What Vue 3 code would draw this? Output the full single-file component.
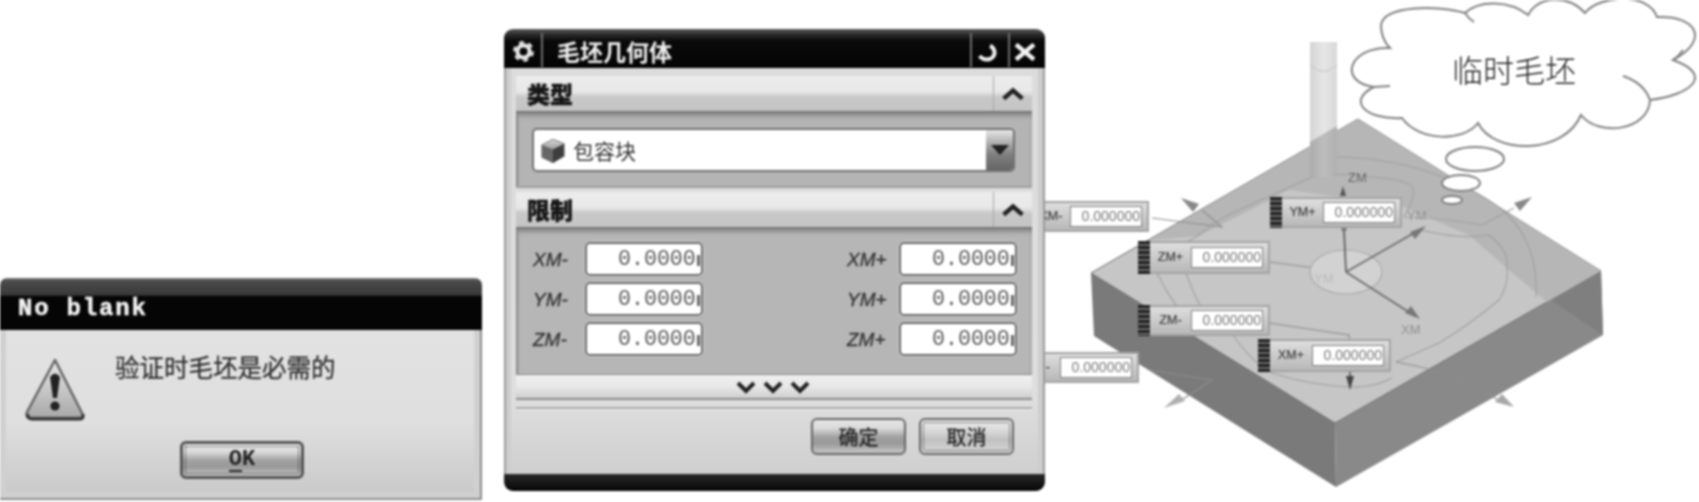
<script setup>
const limits = [
  { l: 'XM-', r: 'XM+' },
  { l: 'YM-', r: 'YM+' },
  { l: 'ZM-', r: 'ZM+' },
]
// Handles sit on the free canvas; positions are relative to the canvas origin (1046, 0).
// The two leftmost ones run underneath the dialog, which covers their labels.
const handles = [
  { id: 'xm', label: 'XM-', x: -15, y: 201, w: 119, h: 31, grip: false },
  { id: 'ym', label: 'YM+', x: 225, y: 197, w: 132, h: 31, grip: true },
  { id: 'zp', label: 'ZM+', x: 93, y: 241, w: 132, h: 33, grip: true },
  { id: 'zm', label: 'ZM-', x: 93, y: 305, w: 132, h: 31, grip: true },
  { id: 'xp', label: 'XM+', x: 213, y: 339, w: 133, h: 33, grip: true },
  { id: 'ym2', label: 'YM-', x: -30, y: 352, w: 124, h: 31, grip: false },
]
</script>

<template>
  <div class="stage">
    <section class="alert">
      <header class="alert-title">No blank</header>
      <div class="alert-body">
        <div class="alert-msg">
          <svg class="warn" viewBox="0 0 62 64">
            <defs>
              <linearGradient id="warnFill" x1="0" y1="0" x2="0" y2="1">
                <stop offset="0" stop-color="#e8e8e8" />
                <stop offset="1" stop-color="#a8a8a8" />
              </linearGradient>
            </defs>
            <path d="M31 3 L58 56 Q60 61 55 61 L7 61 Q1 61 3 55 Z" fill="url(#warnFill)" stroke="#666" stroke-width="2.5" stroke-linejoin="round" />
            <path d="M4 57 Q3 62 8 62 L56 62 Q60 62 59 57" fill="none" stroke="#333" stroke-width="3" />
            <path d="M26 20 Q31 13 36 20 L33 41 L29 41 Z" fill="#222" />
            <circle cx="31" cy="49" r="4.6" fill="#222" />
          </svg>
          <p>验证时毛坯是必需的</p>
        </div>
        <button class="btn ok"><span class="ok-label">OK</span></button>
      </div>
    </section>

    <section class="blank">
      <header class="blank-title">
        <svg class="gear" viewBox="0 0 24 24">
          <circle cx="12" cy="12" r="6.4" fill="none" stroke="#e6e6e6" stroke-width="4.4" />
          <circle cx="12" cy="12" r="9.6" fill="none" stroke="#e6e6e6" stroke-width="2.6" stroke-dasharray="5 5.05" />
        </svg>
        <span class="t-div"></span>
        <span class="t-text">毛坯几何体</span>
        <span class="t-div"></span>
        <svg class="t-hook" viewBox="0 0 20 18">
          <path d="M1.5 12 Q6 17 12 15 Q18 12 16 6 Q15 3 12 2" fill="none" stroke="#eee" stroke-width="4" />
        </svg>
        <span class="t-div"></span>
        <svg class="t-x" viewBox="0 0 22 18">
          <path d="M2 1.5 L20 16.5 M20 1.5 L2 16.5" stroke="#f2f2f2" stroke-width="4.4" />
        </svg>
      </header>

      <div class="blank-body">
        <div class="sec-head">
          <b>类型</b>
          <span class="caret"><svg viewBox="0 0 20 12"><path d="M2 10 L10 3 L18 10" fill="none" stroke="#222" stroke-width="3.8" /></svg></span>
        </div>
        <div class="sec-type">
          <div class="drop">
            <svg class="cube" viewBox="0 0 24 24">
              <defs>
                <linearGradient id="cubeTop" x1="0" y1="0" x2="0" y2="1">
                  <stop offset="0" stop-color="#d8d8d8" />
                  <stop offset="1" stop-color="#9a9a9a" />
                </linearGradient>
              </defs>
              <path d="M2 7 L12 2 L22 6 L22 17 L12 23 L2 18 Z" fill="#666" stroke="#666" stroke-width="1.4" stroke-linejoin="round" />
              <path d="M2 7 L12 2 L22 6 L12 11 Z" fill="url(#cubeTop)" />
              <path d="M12 11 L22 6 L22 17 L12 23 Z" fill="#3d3d3d" />
            </svg>
            <span class="drop-text">包容块</span>
            <span class="drop-btn"><i></i></span>
          </div>
        </div>
        <div class="sec-head">
          <b>限制</b>
          <span class="caret"><svg viewBox="0 0 20 12"><path d="M2 10 L10 3 L18 10" fill="none" stroke="#222" stroke-width="3.8" /></svg></span>
        </div>
        <div class="sec-limit">
          <div v-for="row in limits" :key="row.l" class="lim-row">
            <div class="lim-cell">
              <em>{{ row.l }}</em>
              <span class="num">0.0000</span>
            </div>
            <div class="lim-cell">
              <em>{{ row.r }}</em>
              <span class="num">0.0000</span>
            </div>
          </div>
        </div>
        <div class="more">
          <svg viewBox="0 0 76 14"><path d="M2 3 L10 11 L18 3 M29 3 L37 11 L45 3 M56 3 L64 11 L72 3" fill="none" stroke="#222" stroke-width="4" /></svg>
        </div>
        <div class="sep"></div>
        <div class="actions">
          <button class="btn act">确定</button>
          <button class="btn act dotted">取消</button>
        </div>
      </div>
      <footer class="blank-foot"></footer>
    </section>

    <div class="canvas">
      <svg class="scene" viewBox="1046 0 653 502" width="653" height="502">
        <defs>
          <linearGradient id="tool" x1="0" y1="0" x2="1" y2="0">
            <stop offset="0" stop-color="#d4d4d4" />
            <stop offset=".5" stop-color="#e6e6e6" />
            <stop offset="1" stop-color="#d8d8d8" />
          </linearGradient>
          <linearGradient id="toolIn" x1="0" y1="0" x2="1" y2="0">
            <stop offset="0" stop-color="#acacac" />
            <stop offset=".5" stop-color="#bdbdbd" />
            <stop offset="1" stop-color="#b0b0b0" />
          </linearGradient>
        </defs>
        <!-- block -->
        <path d="M1092 273 L1095 336 L1337 487 L1336 423 Z" fill="#7a7a7a" />
        <path d="M1336 423 L1337 487 L1604 335 L1602 271 Z" fill="#898989" />
        <path d="M1552 300 L1604 335 L1602 271 Z" fill="#7f7f7f" />
        <path d="M1359 119 L1092 273 L1336 423 L1602 271 Z" fill="#c6c6c6" stroke="#6c6c6c" stroke-width="1" />
        <path d="M1359 119 L1150 240 L1200 236 L1290 190 L1400 205 L1470 235 L1510 270 L1548 302 L1602 271 Z" fill="#b6b6b6" />
        <!-- contours -->
        <g fill="none" stroke="#a0a0a0" stroke-width="1.1">
          <path d="M1158 277 Q1170 250 1197 237 Q1220 218 1240 210 L1313 177 Q1345 172 1373 177 Q1410 180 1413 187 Q1418 195 1405 217" />
          <path d="M1313 157 Q1380 155 1433 173 Q1480 190 1507 213 Q1540 245 1537 297" />
          <path d="M1405 217 Q1445 218 1483 225 L1515 208" />
          <path d="M1423 230 Q1460 240 1490 235 Q1510 250 1508 267 Q1510 285 1500 300 Q1470 325 1440 343 L1397 362" />
          <path d="M1160 276 Q1170 300 1200 333" />
          <path d="M1187 273 Q1195 295 1202 307" />
          <path d="M1233 333 Q1250 360 1273 373 Q1310 385 1350 387 Q1375 388 1393 378" />
        </g>
        <g fill="none" stroke="#8d8d8d" stroke-width="1.1">
          <path d="M1153 218 L1223 227 L1203 210" />
          <path d="M1270 262 L1347 272" />
          <path d="M1270 323 L1350 335 L1350 340" />
          <path d="M1397 362 Q1430 368 1457 377 Q1480 385 1503 403" />
          <path d="M1150 370 L1213 380 L1178 403" />
        </g>
        <ellipse cx="1347" cy="272" rx="36" ry="22" fill="#d2d2d2" stroke="#a8a8a8" stroke-width="1.1" />
        <!-- tool -->
        <rect x="1311" y="42" width="27" height="100" fill="url(#tool)" />
        <path d="M1311 65 Q1324 78 1338 65" fill="none" stroke="#c4c4c4" />
        <path d="M1311 142 L1338 126 L1338 173 Q1324 181 1311 175 Z" fill="url(#toolIn)" />
        <!-- axes -->
        <g stroke="#555" stroke-width="1.6" fill="#555">
          <path d="M1347 272 L1345 230" />
          <path d="M1347 272 L1422 229" stroke="#6a6a6a" />
          <path d="M1347 272 L1416 316" stroke="#6a6a6a" />
          <path d="M1344 186 L1341 196 L1347 196 Z" stroke="none" />
          <path d="M1427 226 L1411 232 L1416 239 Z" stroke="none" fill="#777" />
          <path d="M1421 319 L1406 313 L1412 306 Z" stroke="none" fill="#777" />
          <path d="M1351 390 L1347 376 L1355 376 Z" stroke="none" fill="#444" />
          <path d="M1351 372 L1351 377" />
          <circle cx="1345" cy="229" r="2.6" stroke="none" fill="#777" />
        </g>
        <g stroke="none">
          <path d="M1182 198 L1200 204 L1194 212 Z" fill="#888" />
          <path d="M1533 197 L1515 203 L1521 211 Z" fill="#888" />
          <path d="M1165 408 L1186 401 L1180 394 Z" fill="#b0b0b0" />
          <path d="M1515 407 L1496 402 L1503 394 Z" fill="#a8a8a8" />
        </g>
        <g class="axis-text">
          <text x="1349" y="182">ZM</text>
          <text x="1408" y="220" class="mid">YM</text>
          <text x="1402" y="334" class="mid">XM</text>
          <text x="1315" y="283" class="faint">YM</text>
        </g>
        <!-- cloud -->
        <ellipse cx="1476" cy="159" rx="29" ry="12" fill="#fff" stroke="#808080" stroke-width="2" />
        <ellipse cx="1462" cy="183" rx="19" ry="8" fill="#fff" stroke="#808080" stroke-width="2" />
        <ellipse cx="1453" cy="200" rx="10" ry="4" fill="#fff" stroke="#808080" stroke-width="2" />
        <path
          d="M1391 48 C1350 46 1338 82 1375 87 C1348 100 1365 120 1403 118 C1420 142 1465 142 1479 123 C1495 155 1565 155 1582 115 C1600 138 1650 130 1651 100 C1692 95 1716 75 1674 60 C1712 40 1697 15 1658 17 C1650 -8 1600 -5 1586 13 C1570 -5 1540 -5 1529 15 C1510 0 1480 0 1466 13 C1440 5 1385 5 1382 25 C1382 35 1385 42 1391 48 Z"
          fill="#fff" stroke="#808080" stroke-width="2"
        />
        <path d="M1375 87 L1391 86 M1466 13 Q1470 19 1475 22 M1624 76 Q1645 83 1651 100 M1674 60 Q1680 56 1684 50" fill="none" stroke="#808080" stroke-width="2" />
        <text x="1515" y="82" class="cloud-text">临时毛坯</text>
      </svg>

      <div
        v-for="h in handles"
        :key="h.id"
        class="handle"
        :style="{ left: h.x + 'px', top: h.y + 'px', width: h.w + 'px', height: h.h + 'px' }"
      >
        <span v-if="h.grip" class="grip"></span>
        <span class="h-label">{{ h.label }}</span>
        <span class="h-input">0.000000</span>
      </div>
    </div>
  </div>
</template>

<style>
html, body { margin: 0; background: #fff; }
</style>

<style scoped>
.stage {
  position: relative;
  display: flex;
  width: 1699px;
  height: 502px;
  overflow: hidden;
  background: #fff;
  filter: blur(0.9px);
  font-family: "Liberation Sans", "Noto Sans CJK SC", sans-serif;
  color: #222;
}

/* left alert */
.alert {
  flex: none;
  display: flex;
  flex-direction: column;
  width: 482px;
  height: 222px;
  margin-top: 278px;
  border-radius: 7px 7px 0 0;
  overflow: hidden;
}
.alert-title {
  flex: none;
  height: 52px;
  box-sizing: border-box;
  padding: 19px 0 0 18px;
  background: linear-gradient(#7d7d7d 0, #4a4a4a 6%, #3a3a3a 32%, #050505 36%, #050505 100%);
  color: #f4f4f4;
  font: bold 24px/24px "Liberation Mono", monospace;
  letter-spacing: 1.8px;
  -webkit-text-stroke: 0.5px #f4f4f4;
}
.alert-body {
  flex: 1;
  display: flex;
  flex-direction: column;
  box-sizing: border-box;
  border: solid #8c8c8c;
  border-width: 0 2px 2px 0;
  box-shadow: inset 6px 0 0 #d0d0d0, inset -6px -6px 0 #d0d0d0;
  background: linear-gradient(#e2e2e2 0, #dfdfdf 55%, #c8c8c8 100%);
}
.alert-msg {
  flex: none;
  display: flex;
  height: 110px;
  padding: 22px 0 0 24px;
  box-sizing: border-box;
}
.warn {
  flex: none;
  width: 62px;
  height: 64px;
  margin-top: 5px;
}
.alert-msg p {
  margin: 0 0 0 29px;
  font: 400 24.5px/30px "Noto Sans CJK SC", sans-serif;
  color: #333;
  -webkit-text-stroke: 0.3px #333;
}
.btn {
  display: block;
  padding: 0;
  border: 3px solid #555;
  border-radius: 6px;
  background: linear-gradient(#e6e6e6 0, #dadada 25%, #a0a0a0 52%, #9a9a9a 72%, #c8c8c8 100%);
  color: #222;
  font-family: "Noto Sans CJK SC", sans-serif;
}
.ok {
  width: 124px;
  height: 38px;
  margin: 1px 0 0 180px;
  outline: 1px dotted #333;
  outline-offset: -6px;
}
.ok-label {
  font: bold 22px/1 "Liberation Mono", monospace;
  background: linear-gradient(90deg, #222 50%, transparent 50%) no-repeat 0 100% / 100% 2px;
}

/* blank dialog */
.blank {
  flex: none;
  display: flex;
  flex-direction: column;
  width: 541px;
  height: 462px;
  margin: 29px 0 0 22px;
  border-radius: 9px;
  overflow: hidden;
  position: relative;
  z-index: 2;
}
.blank-title {
  flex: none;
  display: flex;
  align-items: center;
  height: 39px;
  box-sizing: border-box;
  padding: 6px 0 0 8px;
  background: linear-gradient(#5a5a5a 0, #2c2c2c 14%, #0a0a0a 30%, #040404 100%);
}
.gear {
  flex: none;
  width: 23px;
  height: 23px;
  margin-right: 6px;
}
.t-div {
  flex: none;
  width: 2px;
  height: 34px;
  margin-top: -4px;
  background: #6e6e6e;
}
.t-text {
  flex: 1;
  margin-left: 14px;
  color: #eee;
  font: 700 23px/1 "Noto Sans CJK SC", sans-serif;
}
.t-hook {
  flex: none;
  width: 20px;
  height: 18px;
  margin: 2px 10px 0 6px;
}
.t-x {
  flex: none;
  width: 22px;
  height: 18px;
  margin: 0 9px 0 4px;
}
.blank-body {
  flex: 1;
  display: flex;
  flex-direction: column;
  padding: 8px 11px 0 10px;
  border: solid #9a9a9a;
  border-width: 0 2px;
  box-shadow: inset 5px 0 0 #cdcdcd, inset -5px 0 0 #cdcdcd;
  background: linear-gradient(#dcdcdc 0, #dedede 82%, #cfcfcf 100%);
}
.sec-head {
  flex: none;
  display: flex;
  align-items: center;
  justify-content: space-between;
  height: 37px;
  box-sizing: border-box;
  border-bottom: 2px solid #777;
  background: linear-gradient(#ececec 0, #e8e8e8 45%, #c8c8c8 60%, #c4c4c4 100%);
}
.sec-head b {
  padding-left: 11px;
  font: 900 23px/1 "Noto Sans CJK SC", sans-serif;
  color: #151515;
  -webkit-text-stroke: 0.4px #151515;
}
.caret {
  flex: none;
  display: flex;
  align-items: center;
  justify-content: center;
  width: 39px;
  height: 100%;
  border-left: 1px solid #a8a8a8;
  box-sizing: border-box;
}
.caret svg { width: 24px; height: 14px; }
.sec-type {
  flex: none;
  height: 75px;
  margin-bottom: 4px;
  box-sizing: border-box;
  padding: 15px 17px 0 16px;
  background: #b4b4b4;
  border-bottom: 2px solid #a0a0a0;
  box-shadow: inset 0 4px 4px -1px #8a8a8a, inset 3px 0 2px -1px #8a8a8a;
}
.drop {
  display: flex;
  align-items: center;
  height: 44px;
  box-sizing: border-box;
  border: 2px solid #707070;
  border-radius: 5px;
  background: #fff;
  overflow: hidden;
}
.cube {
  flex: none;
  width: 26px;
  height: 27px;
  margin-left: 6px;
}
.drop-text {
  flex: 1;
  margin-left: 7px;
  font: 400 21px/1 "Noto Sans CJK SC", sans-serif;
  color: #333;
}
.drop-btn {
  flex: none;
  display: flex;
  align-items: center;
  justify-content: center;
  width: 27px;
  height: 100%;
  background: linear-gradient(#e8e8e8 0, #c0c0c0 22%, #808080 60%, #666 100%);
}
.drop-btn i {
  width: 0;
  height: 0;
  border: 9px solid transparent;
  border-top: 10px solid #222;
  border-bottom: 0;
}
.sec-limit {
  flex: none;
  height: 146px;
  box-sizing: border-box;
  padding: 13px 15px 0 17px;
  display: flex;
  flex-direction: column;
  gap: 6px;
  background: #b6b6b6;
  border-bottom: 1px solid #8a8a8a;
  box-shadow: inset 0 4px 4px -1px #8a8a8a, inset 3px 0 2px -1px #8a8a8a;
}
.lim-row {
  display: flex;
  justify-content: space-between;
  height: 34px;
}
.lim-cell {
  display: flex;
  align-items: center;
}
.lim-cell em {
  width: 52px;
  font: italic 400 19px/1 "Liberation Sans", sans-serif;
  color: #333;
  -webkit-text-stroke: 0.3px #333;
}
.lim-cell .num {
  width: 118px;
  height: 34px;
  box-sizing: border-box;
  padding-left: 31px;
  border: 2px solid #6a6a6a;
  border-radius: 5px;
  box-shadow: 0 0 0 1px #d0d0d0;
  background: #fff;
  white-space: nowrap;
  font: 400 21.6px/30px "Liberation Mono", monospace;
  color: #555;
}
.lim-cell .num::after {
  content: "";
  display: inline-block;
  width: 3px;
  height: 11px;
  margin-left: 1px;
  vertical-align: -1px;
  background: #666;
}
.more {
  flex: none;
  display: flex;
  align-items: center;
  justify-content: center;
  height: 25px;
  box-sizing: border-box;
  border-bottom: 2px solid #8c8c8c;
  background: linear-gradient(#efefef 0, #e8e8e8 50%, #cfcfcf 100%);
}
.more svg { width: 76px; height: 14px; }
.sep {
  flex: none;
  height: 2px;
  margin-top: 7px;
  background: #a8a8a8;
  box-shadow: 0 1px 0 #f2f2f2;
}
.actions {
  flex: none;
  display: flex;
  justify-content: flex-end;
  gap: 13px;
  margin-top: 9px;
  padding-right: 18px;
}
.act {
  width: 95px;
  height: 37px;
  font: 400 20px/1 "Noto Sans CJK SC", sans-serif;
  border-width: 2px;
  border-color: #666;
  -webkit-text-stroke: 0.3px #222;
}
.dotted {
  background: linear-gradient(#e8e8e8 0, #dcdcdc 30%, #c0c0c0 60%, #d8d8d8 100%);
  outline: 1px dotted #333;
  outline-offset: -5px;
}
.blank-foot {
  flex: none;
  height: 17px;
  background: linear-gradient(#2a2a2a, #050505);
}

/* 3D canvas */
.canvas {
  position: relative;
  flex: 1;
  height: 502px;
}
.scene {
  position: absolute;
  left: 0;
  top: 0;
  display: block;
}
.axis-text text {
  font: 400 13px "Liberation Sans", sans-serif;
  fill: #666;
}
.axis-text text.mid { fill: #909090; }
.axis-text text.faint { fill: #bcbcbc; }
.cloud-text {
  font: 300 31px "Noto Sans CJK SC", sans-serif;
  fill: #222;
  text-anchor: middle;
}
.handle {
  position: absolute;
  display: flex;
  align-items: center;
  box-sizing: border-box;
  padding-right: 5px;
  border: 2px solid #a4a4a4;
  background: linear-gradient(#dedede, #b8b8b8);
}
.grip {
  flex: none;
  width: 12px;
  align-self: stretch;
  margin: -2px 0 -2px -2px;
  background: repeating-linear-gradient(#222 0 3px, #6a6a6a 3px 5px);
}
.h-label {
  flex: 1;
  min-width: 0;
  text-align: center;
  font: 400 12.5px/1 "Liberation Sans", sans-serif;
  color: #3c3c3c;
  -webkit-text-stroke: 0.2px #3c3c3c;
  white-space: nowrap;
}
.h-input {
  flex: none;
  width: 72px;
  height: 21px;
  box-sizing: border-box;
  border: 1.5px solid #808080;
  background: #fff;
  text-align: right;
  padding-right: 1px;
  font: 400 14px/18px "Liberation Sans", sans-serif;
  color: #777;
}
</style>
